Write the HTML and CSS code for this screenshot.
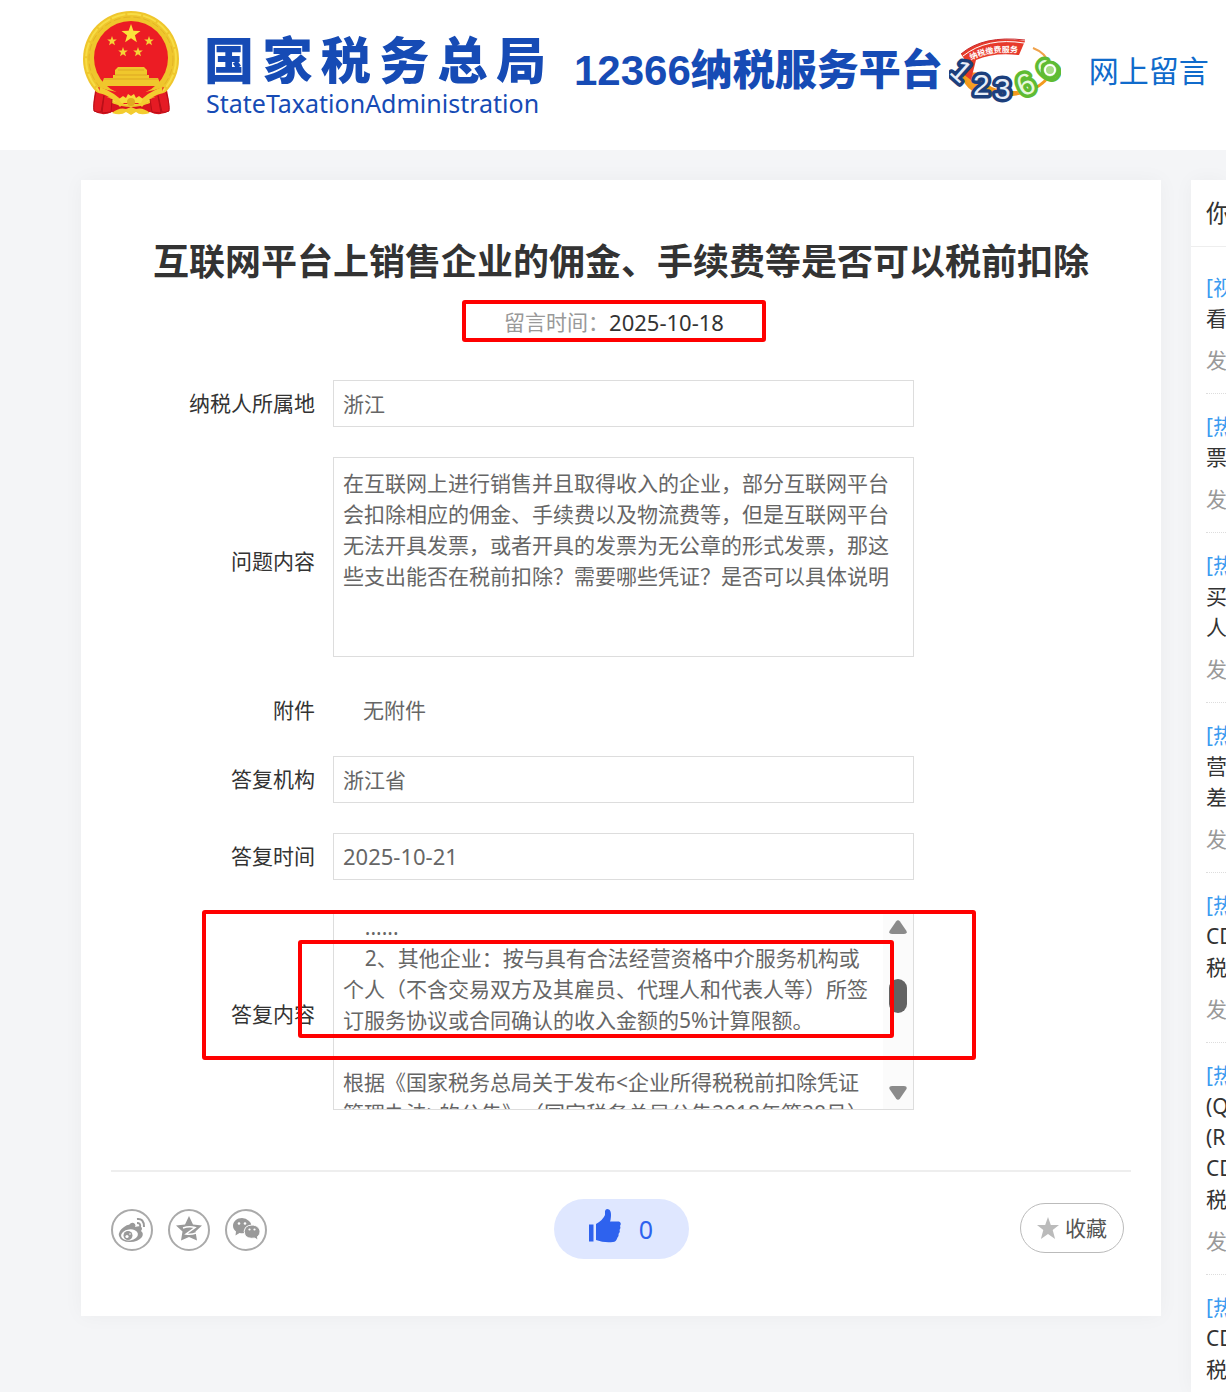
FILE: index.html
```html
<!DOCTYPE html>
<html lang="zh-CN">
<head>
<meta charset="utf-8">
<meta name="viewport" content="width=device-width, initial-scale=1">
<title>网上留言</title>
<link rel="stylesheet" href="styles.css">
</head>
<body>
<header class="header">
  <svg class="emblem" viewBox="0 0 98 106" aria-hidden="true">
    <path d="M14 76 Q10 96 12 101 Q20 107 30 102 L68 102 Q78 107 87 101 Q88 92 84 76Z" fill="#d9141e"/>
    <circle cx="49" cy="49" r="48" fill="#efc62c"/>
    <circle cx="49" cy="49" r="42" fill="none" stroke="#e3b426" stroke-width="1" stroke-dasharray="7 3"/>
    <circle cx="49" cy="49" r="45" fill="none" stroke="#f7dc45" stroke-width="2" stroke-dasharray="14 2"/>
    <circle cx="49" cy="48" r="37" fill="#ec1c24"/>
    <path d="M49 14l2.400 6.700 7.100.2-5.600 4.400 2 6.900-5.900-4-5.900 4 2-6.900-5.600-4.400 7.100-.2z" fill="#fbe13b"/>
    <g fill="#f5d437">
      <path id="s" d="M30 26l1.200 3.400 3.600.1-2.800 2.200 1 3.500-3-2-3 2 1-3.500-2.800-2.200 3.600-.1z"/>
      <use href="#s" x="37"/><use href="#s" x="11" y="11"/><use href="#s" x="26" y="11"/>
    </g>
    <path d="M36 57h26l3 3v5H33v-5zM31 65h36v3h9l3 8H19l3-8h9z" fill="#f0c72c"/>
    <path d="M36 60h26M33 65h32M22 69h54" stroke="#dda722" fill="none"/>
    <path d="M16 77Q49 89 82 77L78 87Q62 86 58 94H40Q36 86 20 87Z" fill="#ec1c24"/>
    <path d="M18 77q16 6 24 16l-4 4Q30 86 17 83zM80 77q-16 6-24 16l4 4q8-11 21-14z" fill="#f3cc2f"/>
    <path d="M14 82Q11 95 12 101q4 2 7 1l3-17M84 82q4 13 3 19-4 2-7 1l-4-17M22 86l-2 17 9-1 1-13M76 86l3 17-9-1-2-13" fill="#e51b24" stroke="#b80f18"/>
    <path d="M37 89l4-3 3 2 2-4 3 2 3-2 2 4 3-2 4 3-2 4H39z" fill="#f7dc3b"/>
    <circle cx="49" cy="92" r="4" fill="#e2ab20"/>
    <path d="M30 103q7-6 14-4l5-2 5 2q7-2 14 4-10 3-14-1l-5 3-5-3q-5 4-14 1z" fill="#f3cc2f"/>
  </svg>
  <div class="agency">
    <div class="agency-cn">国家税务总局</div>
    <div class="agency-en">StateTaxationAdministration</div>
  </div>
  <div class="platform">12366纳税服务平台</div>
  <svg class="hotline" viewBox="0 0 112 66" role="img" aria-label="12366">
    <path d="M14 36Q18 60 58 57 88 55 100 38 92 50 75 54 40 58 26 36z" fill="#f7a01f" stroke="#f39a1e" stroke-width="3"/>
    <path d="M84 10Q97 15 100 26" fill="none" stroke="#f0a24a" stroke-width="2"/>
    <path d="M12 16Q36-4 76 3L70 17Q45 14 27 22L22 42 14 36 16 22z" fill="#e73a2b"/>
    <path d="M12 16Q34-3 76 2" fill="none" stroke="#c92a2c" stroke-width="1"/>
    <path d="M14 18Q38-1 75 5" fill="none" stroke="#fff" stroke-width="1"/>
    <path id="arc" d="M22 22Q42 12 72 15" fill="none"/>
    <text class="banner-text"><textPath href="#arc">纳税缴费服务</textPath></text>
    <g class="num num-blue">
      <text x="4" y="43" transform="rotate(42 12 33)">1</text>
      <text x="24" y="57">2</text>
      <text x="45" y="61">3</text>
    </g>
    <g class="num num-green">
      <text x="68" y="57" transform="rotate(-25 76 46)">6</text>
      <text x="91" y="42" transform="rotate(-52 99 32)">6</text>
    </g>
    <circle cx="101" cy="32" r="8" fill="#a6dc85" stroke="#5fbb33" stroke-width="3"/>
    <circle cx="101" cy="32" r="5" fill="none" stroke="#fff" stroke-width="2"/>
  </svg>
  <a class="section-link" href="#">网上留言</a>
</header>

<div class="layout">
  <main class="card">
    <h1 class="title">互联网平台上销售企业的佣金、手续费等是否可以税前扣除</h1>
    <div class="posted">
      <span class="posted-label">留言时间：</span><time class="date">2025-10-18</time>
      <span class="mark mark-date"></span>
    </div>

    <form class="form">
      <div class="row">
        <label class="label" for="region">纳税人所属地</label>
        <input class="field" id="region" value="浙江" readonly>
      </div>
      <div class="row">
        <label class="label label-tall" for="question">问题内容</label>
        <textarea class="field field-tall" id="question" readonly>在互联网上进行销售并且取得收入的企业，部分互联网平台会扣除相应的佣金、手续费以及物流费等，但是互联网平台无法开具发票，或者开具的发票为无公章的形式发票，那这些支出能否在税前扣除？需要哪些凭证？是否可以具体说明</textarea>
      </div>
      <div class="row row-text">
        <span class="label">附件</span>
        <span class="plain">无附件</span>
      </div>
      <div class="row">
        <label class="label" for="org">答复机构</label>
        <input class="field" id="org" value="浙江省" readonly>
      </div>
      <div class="row">
        <label class="label" for="replied">答复时间</label>
        <input class="field date" id="replied" value="2025-10-21" readonly>
      </div>
      <div class="row">
        <label class="label label-tall" for="answer">答复内容</label>
        <div class="scroll-box">
          <textarea class="answer" id="answer" readonly>    ......
    2、其他企业：按与具有合法经营资格中介服务机构或个人（不含交易双方及其雇员、代理人和代表人等）所签订服务协议或合同确认的收入金额的5%计算限额。

根据《国家税务总局关于发布&lt;企业所得税税前扣除凭证管理办法&gt;的公告》（国家税务总局公告2018年第28号）</textarea>
          <div class="scrollbar" aria-hidden="true">
            <svg class="arrow" viewBox="0 0 18 14"><path d="M7 1.500Q9-1 11 1.500L17.500 11Q18.500 14 15 14H3Q-.5 14 .5 11z"/></svg>
            <span class="thumb"></span>
            <svg class="arrow" viewBox="0 0 18 14"><path d="M7 12.500Q9 15 11 12.500L17.500 3Q18.500 0 15 0H3Q-.5 0 .5 3z"/></svg>
          </div>
        </div>
        <span class="mark mark-outer"></span>
        <span class="mark mark-inner"></span>
      </div>
    </form>

    <footer class="actions">
      <div class="share">
        <a class="share-link" href="#" aria-label="微博">
          <svg viewBox="0 0 42 42"><path d="M18 16q3-4 6-1 1 2 0 3 6-2 7 1 0 2-1 3 3 2 1 6-4 5-12 5-9 0-11-6-1-5 5-9 4-3 6-2z" fill="#999"/><ellipse cx="18.500" cy="26" rx="8.500" ry="5.500" fill="#fff" transform="rotate(-8 18 26)"/><circle cx="17" cy="26.500" r="4.500" fill="#999"/><circle cx="16" cy="27.500" r="1.600" fill="#fff"/><circle cx="19" cy="25" r=".8" fill="#fff"/><path d="M26 10q7-1 7 8M26 14q4 0 3 4" fill="none" stroke="#999" stroke-width="2"/></svg>
        </a>
        <a class="share-link" href="#" aria-label="QQ空间">
          <svg viewBox="0 0 42 42"><path d="M21 7l4 8.500 9 1-6.500 6 1.500 9-8-3.500-8 3.500 1.500-9-6.500-6 9-1z" fill="#999"/><path d="M15 19q6-2 12-.5L18 25q5 1 10-1" fill="none" stroke="#fff" stroke-width="1.500"/></svg>
        </a>
        <a class="share-link" href="#" aria-label="微信">
          <svg viewBox="0 0 42 42"><path d="M17 9c-5 0-9 3.500-9 7.800 0 2.300 1.200 4.300 3 5.600l-.5 4 4-2.500q7 1.500 10.500-3.500 3-5-1-8.500Q21 9 17 9z" fill="#999"/><path d="M27 16c4.500 0 8 3 8 6.800 0 2-1 3.500-2.500 4.800l.5 3.500-3.500-2q-7 1-9.500-3Q18 22 20.500 18.500 23 16 27 16z" fill="#999" stroke="#fff"/><g fill="#fff"><circle cx="14" cy="14.500" r="1.300"/><circle cx="20" cy="14.500" r="1.300"/><circle cx="24.500" cy="20.500" r="1.100"/><circle cx="29.500" cy="20.500" r="1.100"/></g></svg>
        </a>
      </div>
      <button class="like" type="button">
        <svg class="thumb-up" viewBox="0 0 32 34" aria-hidden="true"><path d="M0 15.500h4.500v17H0zM7 15Q14 11 16 6V2Q17-1 20 .5q3 2 1.500 10.500L21 12.500h9Q33 14 31 17q1 2-.5 4 1 2-1 4 .5 2-1 3.500Q27 33 24 33q-9 1-17-2z" fill="#2e62ee"/></svg>
        <span>0</span>
      </button>
      <button class="favorite" type="button">
        <svg class="star" viewBox="0 0 22 22" aria-hidden="true"><path d="M11 0l2.800 8H22l-6.300 5 2.400 9-7.100-5-7.100 5 2.400-9L0 8h8.200z" fill="#bbb"/></svg>
        <span>收藏</span>
      </button>
    </footer>
  </main>

  <aside class="sidebar">
    <h2 class="sidebar-title">你</h2>
    <ul class="list">
      <li class="item"><a href="#"><em>[视</em><br>看</a><p>发</p></li>
      <li class="item"><a href="#"><em>[热</em><br>票</a><p>发</p></li>
      <li class="item"><a href="#"><em>[热</em><br>买<br>人</a><p>发</p></li>
      <li class="item"><a href="#"><em>[热</em><br>营<br>差</a><p>发</p></li>
      <li class="item"><a href="#"><em>[热</em><br>CD<br>税</a><p>发</p></li>
      <li class="item"><a href="#"><em>[热</em><br>(Q<br>(R<br>CD<br>税</a><p>发</p></li>
      <li class="item item-last"><a href="#"><em>[热</em><br>CD<br>税</a></li>
    </ul>
  </aside>
</div>
</body>
</html>
```

FILE: styles.css
```css
* {
  box-sizing: border-box;
}

body {
  margin: 0;
  min-height: 100vh;
  display: flex;
  flex-direction: column;
  overflow-x: hidden;
  background: #f4f5f7;
  color: #333;
  font-family: "Noto Sans", "Noto Sans CJK SC", sans-serif;
  font-size: 21px;
  line-height: 31px;
  text-spacing-trim: space-all;
}

a {
  color: inherit;
  text-decoration: none;
}

input,
textarea,
button {
  font: inherit;
  color: inherit;
}

/* Header */
.header {
  display: flex;
  align-items: center;
  height: 150px;
  padding: 0 0 24px 82px;
  background: #fff;
  white-space: nowrap;
}

.emblem {
  flex: none;
  width: 98px;
  height: 106px;
}

.agency {
  flex: none;
  width: 342px;
  margin: 22px 0 0 24px;
  color: #164bb5;
}

.agency-cn {
  font-size: 50px;
  font-weight: 900;
  line-height: 58px;
  text-align-last: justify;
}

.agency-en {
  padding-left: 2px;
  font-size: 25px;
  line-height: 28px;
}

.platform {
  flex: none;
  margin: 16px 0 0 28px;
  color: #164bb5;
  font-family: "Liberation Sans", "Noto Sans CJK SC", sans-serif;
  font-size: 42px;
  font-weight: 900;
  line-height: 50px;
}

.hotline {
  flex: none;
  width: 112px;
  height: 66px;
  margin: 16px 0 0 6px;
}

.banner-text {
  fill: #fff;
  font-size: 8px;
  font-weight: 700;
}

.num {
  font-family: "Liberation Sans", sans-serif;
  font-size: 30px;
  paint-order: stroke;
  stroke-width: 7;
  stroke-linejoin: round;
}

.num-blue {
  fill: #e8eef8;
  stroke: #1c3f7c;
}

.num-green {
  fill: #e9f8dd;
  stroke: #5fbb33;
}

.section-link {
  margin: 16px 0 0 28px;
  color: #106bcb;
  font-size: 30px;
  line-height: 40px;
}

/* Page columns */
.layout {
  flex: 1;
  display: flex;
  gap: 30px;
  padding: 30px 0 0 81px;
}

.card {
  flex: 1;
  min-width: 0;
  align-self: flex-start;
  padding: 55px 30px 57px;
  background: #fff;
  box-shadow: 0 0 20px rgba(0, 0, 0, 0.04);
}

.title {
  margin: 0;
  font-size: 36px;
  line-height: 54px;
  text-align: center;
}

.posted {
  position: relative;
  display: flex;
  justify-content: center;
  align-items: center;
  margin-top: 18px;
  padding-right: 14px;
}

.posted-label {
  color: #999;
}

.date {
  font-size: 22px;
}

/* Red annotation frames laid over the content */
.mark {
  position: absolute;
  border: 4px solid #f00;
  border-radius: 3px;
  pointer-events: none;
}

.mark-date {
  top: -7px;
  left: calc(50% - 159px);
  width: 304px;
  height: 42px;
}

.mark-outer {
  top: 0;
  left: 91px;
  width: 774px;
  height: 150px;
}

.mark-inner {
  top: 30px;
  left: 187px;
  width: 596px;
  height: 98px;
}

/* Form */
.form {
  display: flex;
  flex-direction: column;
  gap: 30px;
  margin-top: 42px;
}

.row {
  position: relative;
  display: grid;
  grid-template-columns: 20% 57%;
  column-gap: 18px;
  align-items: center;
}

.row-text {
  padding-top: 8px;
}

.label {
  text-align: right;
}

.label-tall {
  padding-top: 8px;
}

.plain {
  padding-left: 30px;
  color: #666;
}

.field {
  width: 100%;
  height: 47px;
  padding: 0 9px 2px;
  border: 1px solid #ddd;
  border-radius: 0;
  outline: 0;
  background: #fff;
  color: #666;
}

.field-tall {
  display: block;
  height: 200px;
  padding-top: 10px;
  resize: none;
  overflow: hidden;
}

.scroll-box {
  display: flex;
  height: 200px;
  border: 1px solid #ddd;
}

.answer {
  flex: 1;
  min-width: 0;
  height: 198px;
  padding: 1px 9px 0;
  border: 0;
  outline: 0;
  background: #fff;
  color: #666;
  resize: none;
  overflow: hidden;
}

.scrollbar {
  display: flex;
  flex-direction: column;
  justify-content: space-between;
  align-items: center;
  width: 30px;
  padding: 9px 0;
  background: #fbfbfb;
}

.arrow {
  width: 18px;
  height: 14px;
  fill: #8b8b8b;
}

.thumb {
  width: 18px;
  height: 34px;
  margin-bottom: 28px;
  border-radius: 9px;
  background: #636363;
}

/* Actions */
.actions {
  display: grid;
  grid-template-columns: 1fr auto 1fr;
  align-items: center;
  margin-top: 60px;
  padding-top: 27px;
  border-top: 2px solid #eee;
}

.share {
  display: flex;
  gap: 15px;
  padding-top: 2px;
}

.share-link {
  width: 42px;
  height: 42px;
  border: 2px solid #aaa;
  border-radius: 50%;
}

.share-link svg {
  display: block;
  width: 42px;
  height: 42px;
  margin: -2px;
}

.like {
  display: flex;
  align-items: center;
  justify-content: center;
  gap: 18px;
  width: 135px;
  height: 60px;
  padding: 0;
  border: 0;
  border-radius: 30px;
  background: #dfe7ff;
  color: #2e62ee;
  font-size: 25px;
}

.thumb-up {
  width: 32px;
  height: 34px;
  margin-bottom: 6px;
}

.favorite {
  justify-self: end;
  display: flex;
  align-items: center;
  justify-content: center;
  gap: 6px;
  width: 104px;
  height: 50px;
  margin: 0 7px 2px 0;
  padding: 0;
  border: 1px solid #bbb;
  border-radius: 25px;
  background: #fff;
  color: #555;
}

.star {
  width: 22px;
  height: 22px;
}

/* Sidebar */
.sidebar {
  flex: 0 0 35px;
  overflow: hidden;
  background: #fff;
  box-shadow: 0 0 20px rgba(0, 0, 0, 0.04);
  white-space: nowrap;
}

.sidebar-title {
  margin: 0;
  padding: 0 15px;
  border-bottom: 1px solid #eee;
  font-size: 24px;
  font-weight: 400;
  line-height: 66px;
}

.list {
  margin: 0;
  padding: 8px 0 0 15px;
  list-style: none;
}

.item {
  padding: 17px 0;
  border-bottom: 1px dotted #ddd;
}

.item-last {
  padding-bottom: 0;
  border-bottom: 0;
}

.item a {
  display: block;
}

.item em {
  color: #3a9bf0;
  font-style: normal;
}

.item p {
  margin: 11px 0 0;
  color: #999;
}
```
